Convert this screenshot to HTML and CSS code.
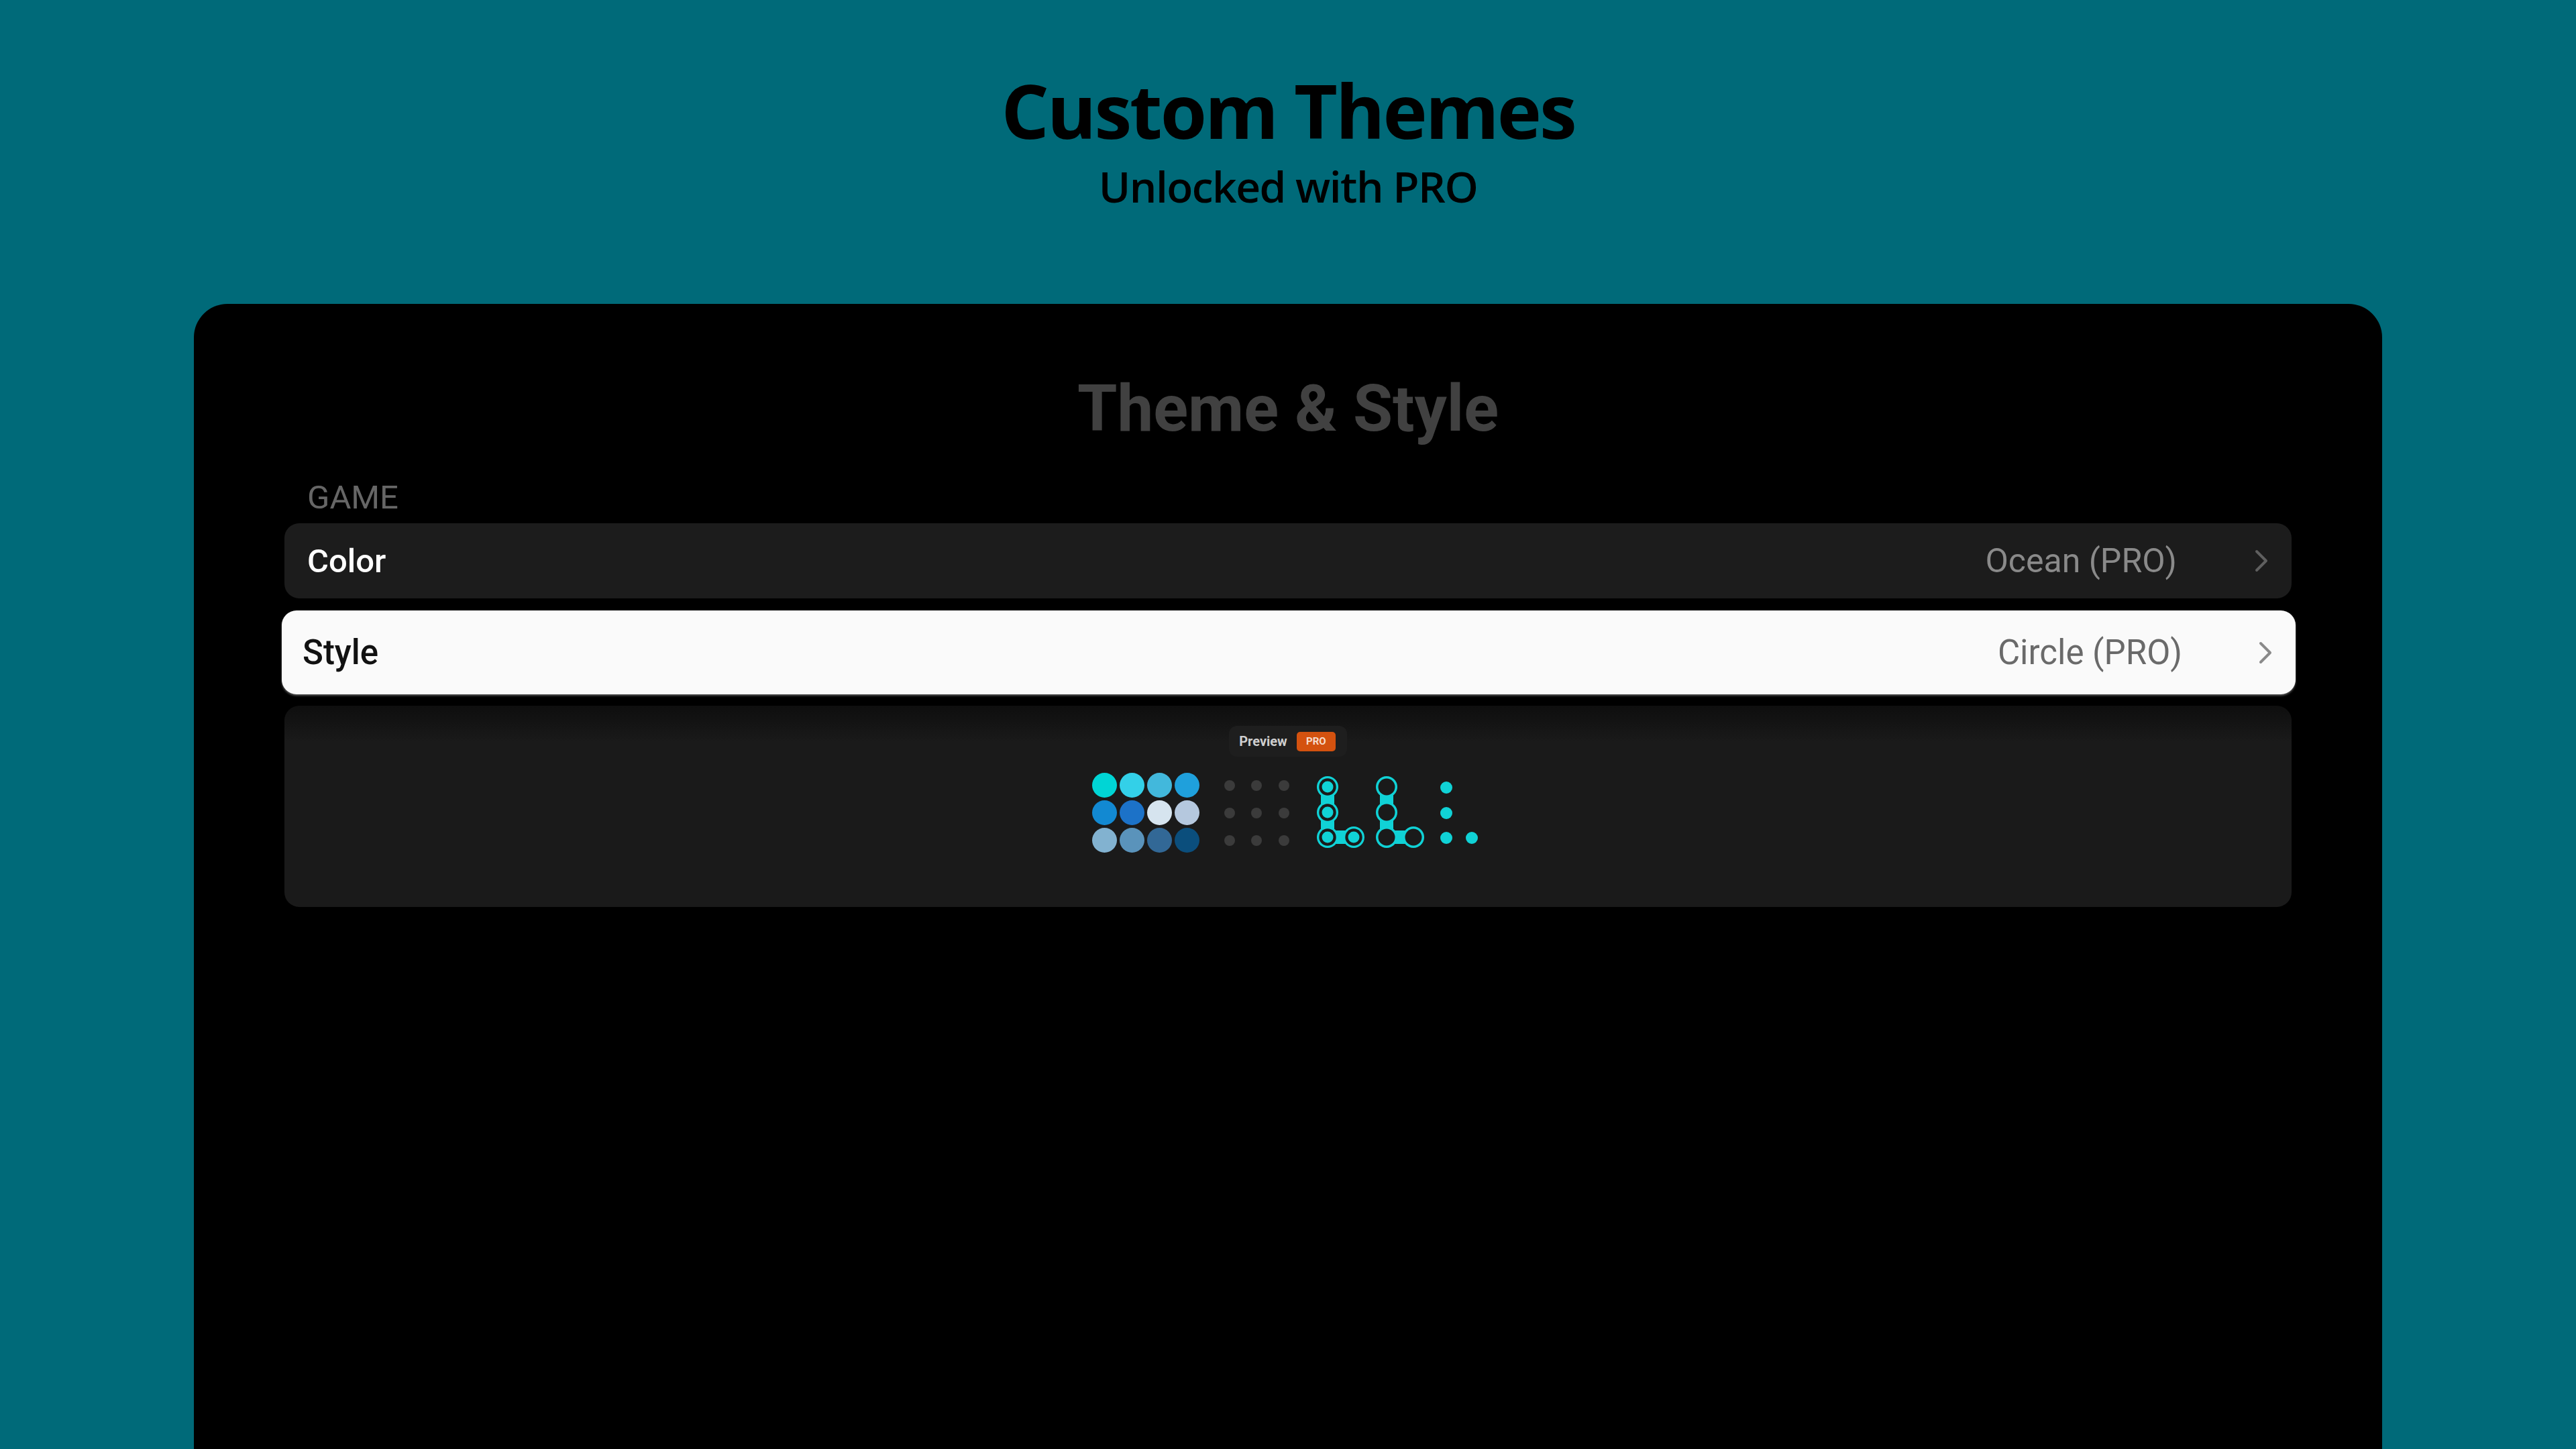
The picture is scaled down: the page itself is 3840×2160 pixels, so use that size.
FILE: index.html
```html
<!DOCTYPE html>
<html lang="en">
<head>
  <meta charset="UTF-8" />
  <meta name="viewport" content="width=device-width, initial-scale=1" />
  <title>Custom Themes</title>
  <link rel="stylesheet" href="styles.css">
</head>
<body>

<header class="hero">
  <h1 class="hero-title">Custom Themes</h1>
  <p class="hero-sub">Unlocked with PRO</p>
</header>

<main class="device">
  <h2 class="screen-title">Theme &amp; Style</h2>

  <div class="section-label">GAME</div>

  <div class="row">
    <span class="row-label">Color</span>
    <span class="row-value">Ocean (PRO)</span>
    <svg class="chevron" viewBox="0 0 20 34"><polyline points="3,3 17,17 3,31" /></svg>
  </div>

  <div class="row row-active">
    <span class="row-label">Style</span>
    <span class="row-value">Circle (PRO)</span>
    <svg class="chevron" viewBox="0 0 20 34"><polyline points="3,3 17,17 3,31" /></svg>
  </div>

  <div class="preview">
    <div class="preview-tag">
      <span>Preview</span>
      <span class="badge">PRO</span>
    </div>
    <div class="preview-art">
      <div class="swatches">
        <span class="c1"></span><span class="c2"></span><span class="c3"></span><span class="c4"></span>
        <span class="c5"></span><span class="c6"></span><span class="c7"></span><span class="c8"></span>
        <span class="c9"></span><span class="c10"></span><span class="c11"></span><span class="c12"></span>
      </div>
      <svg class="shapes" width="379" height="120" viewBox="0 0 379 120">
        <!-- empty board -->
        <g fill="#3b3b3b">
          <circle cx="8" cy="19" r="8" /><circle cx="48" cy="19" r="8" /><circle cx="89" cy="19" r="8" />
          <circle cx="8" cy="60" r="8" /><circle cx="48" cy="60" r="8" /><circle cx="89" cy="60" r="8" />
          <circle cx="8" cy="101" r="8" /><circle cx="48" cy="101" r="8" /><circle cx="89" cy="101" r="8" />
        </g>
        <!-- filled path -->
        <polyline points="154,21 154,96 193,96" fill="none" stroke="#10d2d6" stroke-width="20" />
        <g fill="#10d2d6">
          <circle cx="154" cy="21" r="16" /><circle cx="154" cy="59" r="16" />
          <circle cx="154" cy="96" r="16" /><circle cx="193" cy="96" r="16" />
        </g>
        <g fill="#1a1a1a">
          <circle cx="154" cy="21" r="12.7" /><circle cx="154" cy="59" r="12.7" />
          <circle cx="154" cy="96" r="12.7" /><circle cx="193" cy="96" r="12.7" />
        </g>
        <g fill="#10d2d6">
          <circle cx="154" cy="21" r="8.5" /><circle cx="154" cy="59" r="8.5" />
          <circle cx="154" cy="96" r="8.5" /><circle cx="193" cy="96" r="8.5" />
        </g>
        <!-- hollow path -->
        <polyline points="242,21 242,96 282,96" fill="none" stroke="#10d2d6" stroke-width="20" />
        <g fill="#10d2d6">
          <circle cx="242" cy="21" r="16" /><circle cx="242" cy="59" r="16" />
          <circle cx="242" cy="96" r="16" /><circle cx="282" cy="96" r="16" />
        </g>
        <g fill="#1a1a1a">
          <circle cx="242" cy="21" r="12.5" /><circle cx="242" cy="59" r="12.5" />
          <circle cx="242" cy="96" r="12.5" /><circle cx="282" cy="96" r="12.5" />
        </g>
        <!-- dots -->
        <g fill="#10d2d6">
          <circle cx="331" cy="22" r="9" /><circle cx="331" cy="60" r="9" />
          <circle cx="331" cy="97" r="9" /><circle cx="369" cy="97" r="9" />
        </g>
      </svg>
    </div>
  </div>
</main>

</body>
</html>
```

FILE: styles.css
```css
body {
  margin: 0;
  background: #006a79;
  height: 2160px;
  overflow: hidden;
  display: flex;
  flex-direction: column;
}
.hero {
  text-align: center;
  padding-top: 108px;
  font-family: "Open Sans", sans-serif;
  color: #000;
}
.hero-title {
  margin: 0;
  font-size: 112px;
  line-height: 112px;
  font-weight: 700;
  letter-spacing: -3px;
}
.hero-sub {
  margin: 26px 0 0;
  font-size: 64px;
  line-height: 64px;
  font-weight: 600;
  letter-spacing: -1.5px;
}
/* Экран устройства */
.device {
  margin: 143px 289px 0;
  flex: 1;
  background: #000;
  border-radius: 50px 50px 0 0;
  padding: 108px 135px 0;
  font-family: Roboto, "Liberation Sans", sans-serif;
}
.screen-title {
  margin: 0;
  text-align: center;
  font-size: 96px;
  line-height: 96px;
  font-weight: 700;
  color: #414141;
}
.section-label {
  margin-top: 60px;
  padding-left: 34px;
  font-size: 49px;
  line-height: 49px;
  color: #666;
}
.row {
  margin-top: 14px;
  height: 112px;
  display: flex;
  align-items: center;
  padding: 0 35px 0 34px;
  background: #1c1c1c;
  border-radius: 22px;
}
.row-label {
  flex: 1;
  font-size: 49px;
  font-weight: 500;
  color: #fff;
}
.row-value {
  font-size: 50px;
  color: #8a8a8a;
  margin-right: 116px;
}
.chevron {
  width: 20px;
  height: 34px;
  fill: none;
  stroke: #5f5f5f;
  stroke-width: 4;
  stroke-linecap: round;
  stroke-linejoin: round;
}
.row-active {
  margin: 18px -6px 0 -4px;
  height: 125px;
  padding: 0 35px 0 31px;
  background: #fafafa;
  box-shadow: 0 2px 3px rgba(150, 150, 150, 0.6);
}
.row-active .row-label {
  color: #111;
  font-size: 51px;
}
.row-active .row-value {
  color: #6a6a6a;
  font-size: 51px;
  margin-right: 114px;
}
.row-active .chevron {
  stroke: #8a8a8a;
}
/* Превью */
.preview {
  margin-top: 17px;
  height: 300px;
  box-sizing: border-box;
  padding-top: 30px;
  border-radius: 22px;
  background: linear-gradient(#0e0e0e, #1a1a1a 18%);
  display: flex;
  flex-direction: column;
  align-items: center;
}
.preview-tag {
  height: 46px;
  padding: 0 17px 0 15px;
  display: flex;
  align-items: center;
  gap: 14px;
  background: #1e1e1e;
  border-radius: 12px;
  font-size: 20px;
  font-weight: 700;
  color: #cfcfcf;
}
.badge {
  width: 58px;
  height: 29px;
  line-height: 29px;
  text-align: center;
  border-radius: 5px;
  background: #d4520f;
  color: #f6dccc;
  font-size: 15px;
}
.preview-art {
  margin: 24px 8px 0 0;
  display: flex;
  align-items: flex-start;
  gap: 37px;
}
.swatches {
  display: grid;
  grid-template-columns: repeat(4, 37px);
  grid-auto-rows: 37px;
  gap: 4px;
}
.swatches span {
  border-radius: 50%;
}
.c1 { background: #00d5d5; }
.c2 { background: #33d0e8; }
.c3 { background: #42b8dc; }
.c4 { background: #1fa0dc; }
.c5 { background: #1289d2; }
.c6 { background: #1c72c8; }
.c7 { background: #d6e4ef; }
.c8 { background: #b5c8de; }
.c9 { background: #82b2d0; }
.c10 { background: #5a93bb; }
.c11 { background: #326896; }
.c12 { background: #0b4e7c; }
.shapes {
  display: block;
}
```
